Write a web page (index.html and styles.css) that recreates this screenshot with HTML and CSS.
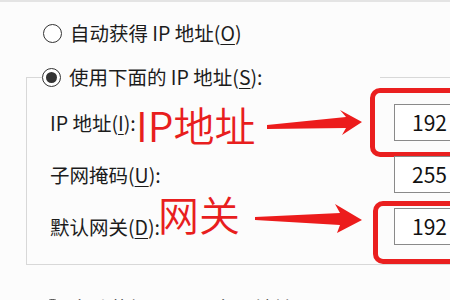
FILE: index.html
```html
<!DOCTYPE html>
<html lang="zh-CN">
<head>
<meta charset="utf-8">
<title>IP 设置</title>
<link rel="stylesheet" href="styles.css">
</head>
<body>
<div class="topband"></div>
<div class="radio-row first">
  <span class="radio"></span>
  <span class="caption">自动获得 IP 地址(<u>O</u>)</span>
</div>
<fieldset class="group">
  <legend class="radio-row legend">
    <span class="radio checked"></span>
    <span class="caption">使用下面的 IP 地址(<u>S</u>):</span>
  </legend>
  <div class="field-row">
    <span class="label">IP 地址(<u>I</u>):</span>
    <div class="field hl hl-1"><div class="ipbox">192</div></div>
    <span class="note note-1">IP地址</span>
    <svg class="arrow arrow-1" width="99" height="29" viewBox="0 0 99 29"><polygon points="2,17 81,9 75,2 97,14 77,27 81,20 2,21" fill="#ec1c1c"/></svg>
  </div>
  <div class="field-row">
    <span class="label">子网掩码(<u>U</u>):</span>
    <div class="field"><div class="ipbox">255</div></div>
  </div>
  <div class="field-row">
    <span class="label">默认网关(<u>D</u>):</span>
    <div class="field hl hl-3"><div class="ipbox">192</div></div>
    <span class="note note-3">网关</span>
    <svg class="arrow arrow-3" width="111" height="33" viewBox="0 0 111 33"><polygon points="2,15 87,11 82,2 109,18 84,31 87,23 2,18" fill="#ec1c1c"/></svg>
  </div>
</fieldset>
<div class="radio-row last">
  <span class="radio"></span>
  <span class="caption">自动获得 DNS 服务器地址(<u>B</u>)</span>
</div>
</body>
</html>
```

FILE: styles.css
```css
html, body {
  margin: 0;
  padding: 0;
}
body {
  width: 450px;
  height: 300px;
  overflow: hidden;
  background: #fcfcfc;
  font-family: "Noto Sans CJK SC", "Noto Sans", sans-serif;
  font-size: 19.5px;
  color: #1c1c1c;
}
.topband {
  height: 2px;
  background: #e4e4e4;
}
.radio-row {
  display: flex;
  align-items: center;
  gap: 8px;
  height: 28px;
  line-height: 28px;
  white-space: nowrap;
}
.radio-row.first {
  margin-top: 17px;
  padding-left: 43px;
}
.radio-row.last {
  margin-top: 29px;
  padding-left: 43px;
}
.radio {
  width: 19px;
  height: 19px;
  box-sizing: border-box;
  border: 1.5px solid #333;
  border-radius: 50%;
  flex: none;
  display: flex;
  align-items: center;
  justify-content: center;
  background: #fff;
}
.radio.checked::after {
  content: "";
  width: 11px;
  height: 11px;
  border-radius: 50%;
  background: #333;
}
u {
  text-decoration-thickness: 1px;
  text-underline-offset: 3px;
}
.group {
  margin: 16px 0 0 26px;
  padding: 5px 0 12px 15px;
  border: 1px solid #d8d8d8;
  width: 600px;
  min-width: 0;
}
.legend {
  padding: 0;
  width: 338px;
  box-sizing: border-box;
}
.field-row {
  position: relative;
  display: grid;
  grid-template-columns: 352px auto;
  align-items: center;
  height: 52px;
  padding-left: 8px;
}
.label {
  white-space: nowrap;
}
.field {
  position: relative;
  margin-left: -8px;
}
.ipbox {
  width: 100px;
  height: 37px;
  box-sizing: border-box;
  border: 1px solid #8a8a8a;
  background: #fff;
  font-size: 21px;
  line-height: 35px;
  padding-left: 17px;
  color: #111;
}
.hl::before {
  content: "";
  position: absolute;
  border: 5px solid #ea1f1f;
  border-radius: 10px;
  right: -60px;
}
.hl-1::before {
  left: -24px;
  top: -16px;
  bottom: -16px;
}
.hl-3::before {
  left: -21px;
  top: -7px;
  bottom: -19px;
}
.note {
  position: absolute;
  color: #e81e1e;
  font-size: 41px;
  font-weight: 350;
  line-height: 41px;
  white-space: nowrap;
}
.note-1 {
  left: 94px;
  top: 8px;
}
.note-3 {
  left: 116px;
  top: -7px;
}
.arrow {
  position: absolute;
}
.arrow-1 {
  left: 223px;
  top: 12px;
}
.arrow-3 {
  left: 211px;
  top: 2px;
}
```
